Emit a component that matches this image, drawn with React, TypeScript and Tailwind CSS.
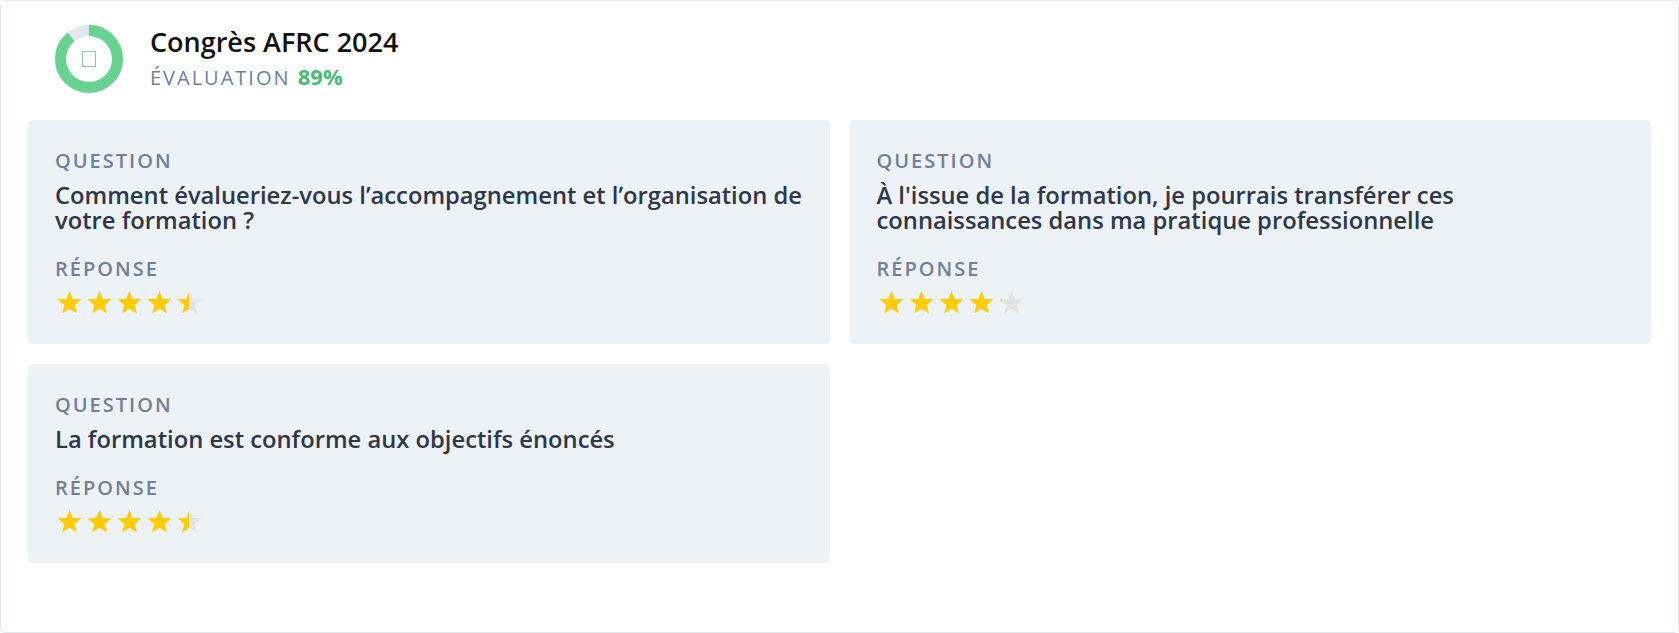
import React from "react";

const FONT = { fontFamily: '"Open Sans", "Noto Sans", sans-serif' };

function Star({ fill, id }: { fill: number; id: string }) {
  const pct = Math.max(0, Math.min(1, fill)) * 100;
  return (
    <svg width="27" height="25" viewBox="0 0 24 22.5" className="block">
      <defs>
        <linearGradient id={id} x1="0" x2="1" y1="0" y2="0">
          <stop offset={`${pct}%`} stopColor="#FFCC00" />
          <stop offset={`${pct}%`} stopColor="#E3E3E3" />
        </linearGradient>
      </defs>
      <polygon
        points="12,0.6 14.9,8 22.8,8.4 16.6,13.4 18.7,21.2 12,16.8 5.3,21.2 7.4,13.4 1.2,8.4 9.1,8"
        fill={`url(#${id})`}
      />
    </svg>
  );
}

function Stars({ value, id }: { value: number; id: string }) {
  return (
    <div className="flex gap-[3px] pl-[1px]">
      {[0, 1, 2, 3, 4].map((i) => (
        <Star key={i} id={`${id}-${i}`} fill={value - i} />
      ))}
    </div>
  );
}

function Card({ question, value, id }: { question: string; value: number; id: string }) {
  return (
    <div className="bg-[#EDF2F7] rounded-[5px] px-[27px] pt-[29px] pb-[29px]">
      <div className="text-[20px] leading-[24px] font-semibold tracking-[0.1em] text-[#718096]">QUESTION</div>
      <div className="mt-[10px] text-[23.75px] leading-[25px] font-semibold text-[#2D3748]">{question}</div>
      <div className="mt-[24px] text-[20px] leading-[24px] font-semibold tracking-[0.1em] text-[#718096]">RÉPONSE</div>
      <div className="mt-[9px]">
        <Stars value={value} id={id} />
      </div>
    </div>
  );
}

function Donut() {
  const r = 28.5;
  const c = 2 * Math.PI * r;
  return (
    <div className="relative w-[68px] h-[68px] shrink-0">
      <svg width="68" height="68" viewBox="0 0 68 68" className="block">
        <circle cx="34" cy="34" r={r} fill="none" stroke="#E2E8F0" strokeWidth="11" />
        <circle
          cx="34"
          cy="34"
          r={r}
          fill="none"
          stroke="#68D391"
          strokeWidth="11"
          strokeDasharray={`${c * 0.89} ${c}`}
          transform="rotate(-90 34 34)"
        />
      </svg>
      <div className="absolute left-[27px] top-[26px] w-[14px] h-[16px] border border-[#8cc7a4]" />
    </div>
  );
}

export default function App() {
  return (
    <div style={FONT} className="w-full h-[633px] bg-white">
      <div className="h-full border border-[#E2E8F0] rounded-[5px] bg-white">
        <div className="flex items-center pl-[54px] pt-[24px]">
          <Donut />
          <div className="ml-[27px]">
            <div className="text-[27px] leading-[32px] font-semibold text-[#111111]">Congrès AFRC 2024</div>
            <div className="mt-[4px] text-[20px] leading-[28px] tracking-[0.1em] text-[#718096]">
              ÉVALUATION <span className="text-[22px] font-bold text-[#48BB78] tracking-normal">89%</span>
            </div>
          </div>
        </div>
        <div className="grid grid-cols-2 gap-[20px] px-[27px] mt-[27px]">
          <Card
            id="s1"
            value={4.5}
            question="Comment évalueriez-vous l’accompagnement et l’organisation de votre formation ?"
          />
          <Card
            id="s2"
            value={4.1}
            question="À l'issue de la formation, je pourrais transférer ces connaissances dans ma pratique professionnelle"
          />
          <Card id="s3" value={4.5} question="La formation est conforme aux objectifs énoncés" />
        </div>
      </div>
    </div>
  );
}
